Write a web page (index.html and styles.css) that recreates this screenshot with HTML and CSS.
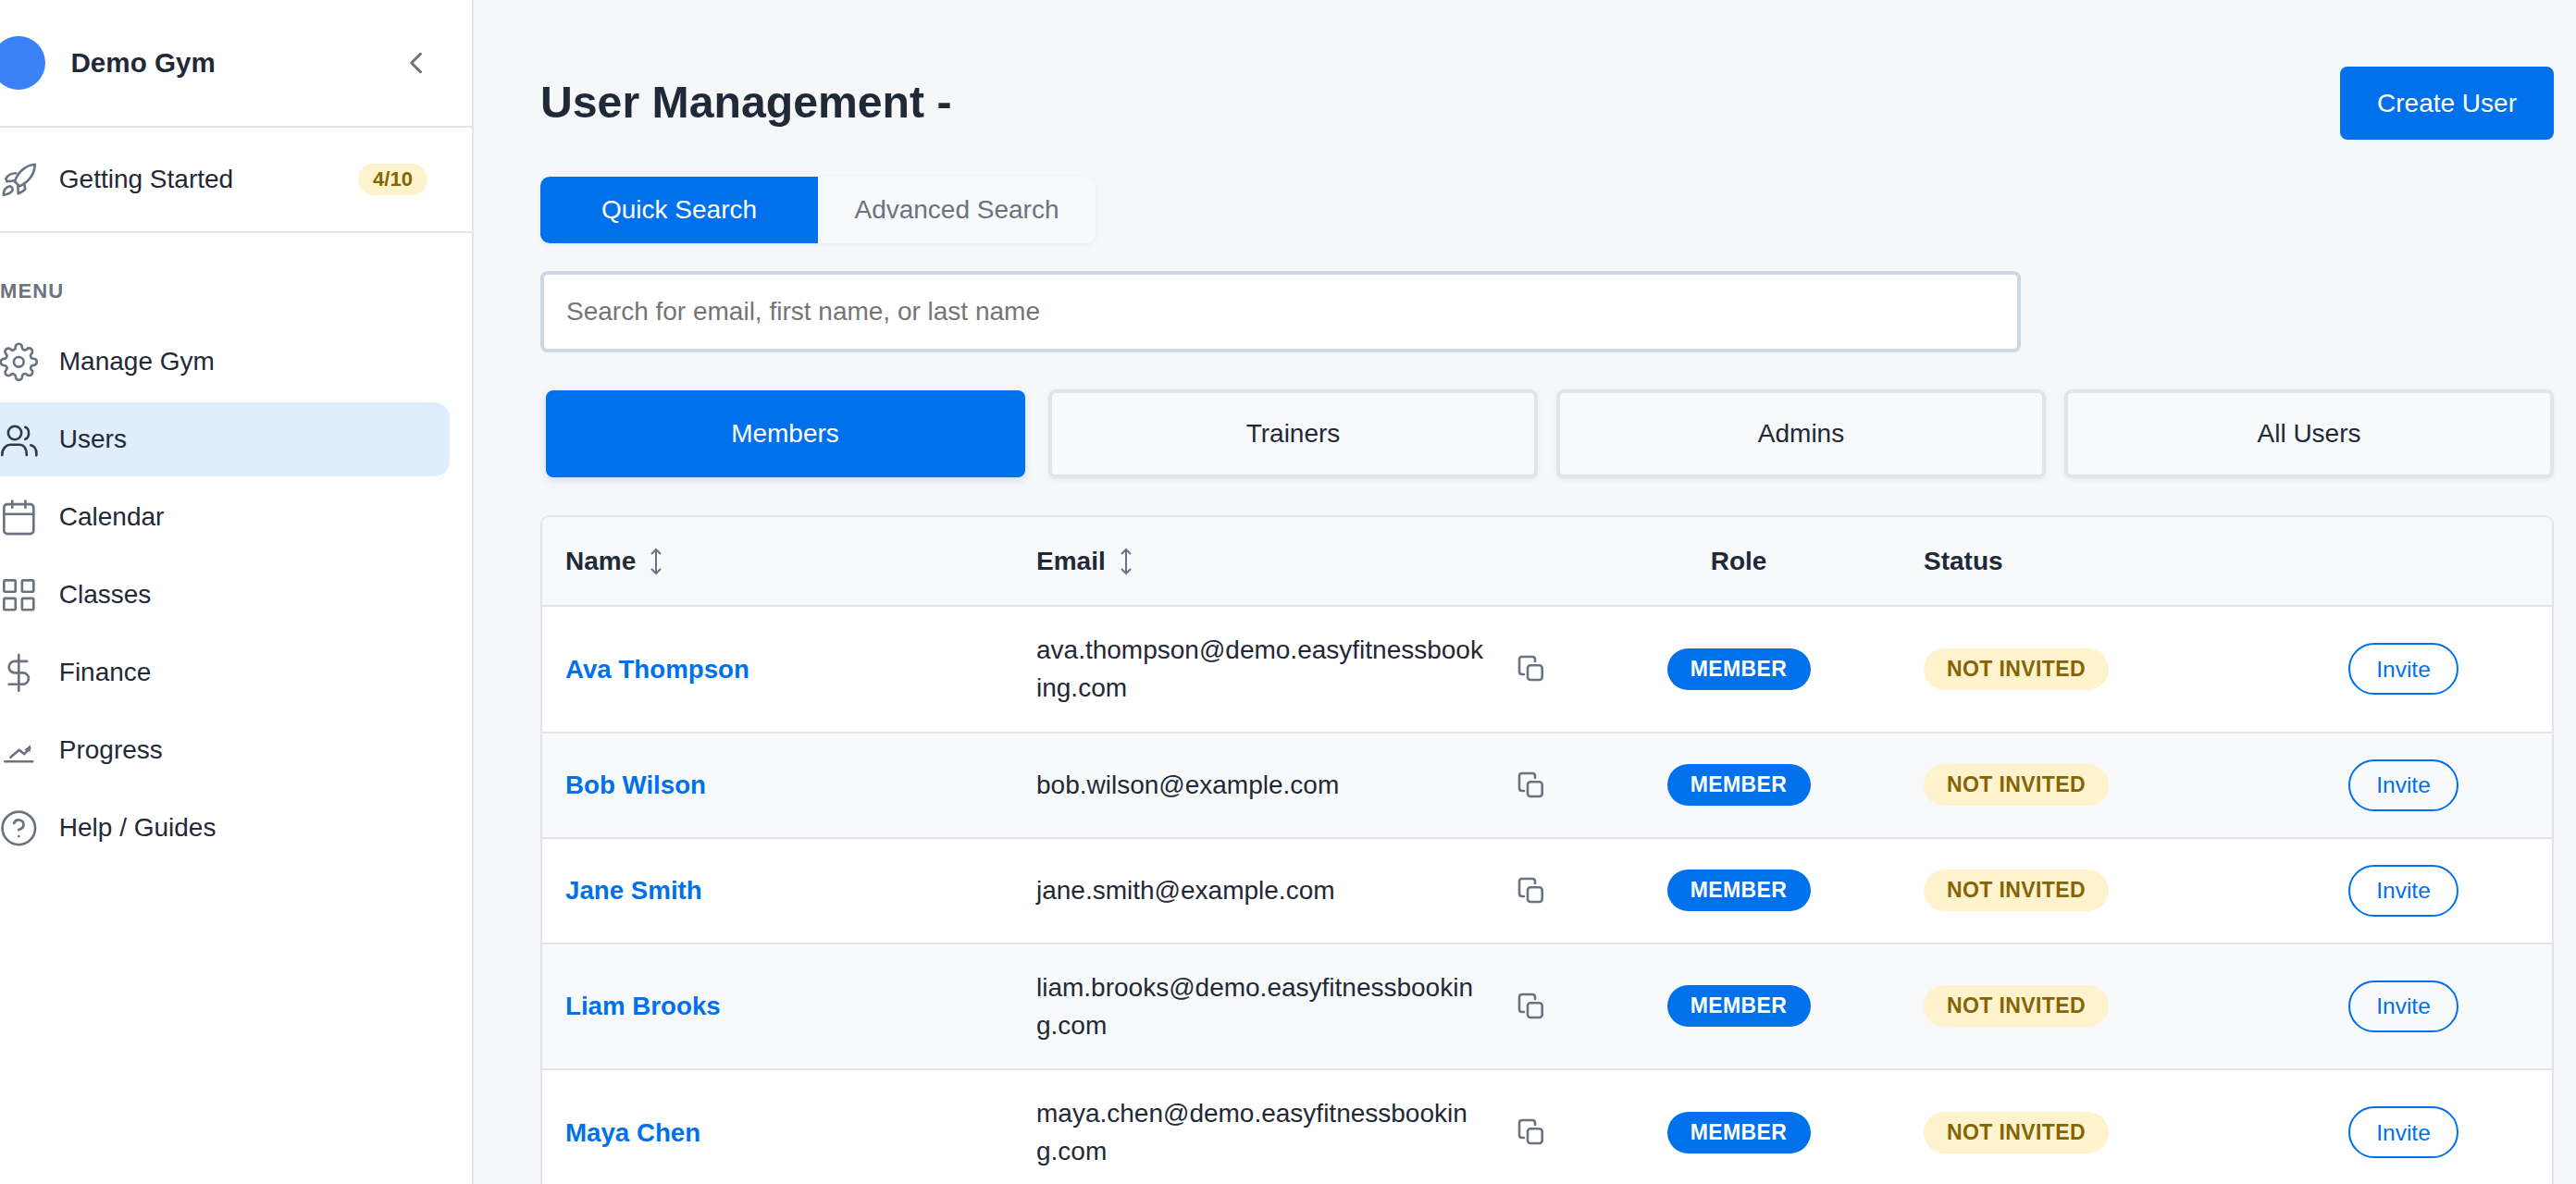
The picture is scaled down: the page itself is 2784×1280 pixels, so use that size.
FILE: index.html
```html
<!DOCTYPE html>
<html lang="en">
<head>
<meta charset="utf-8">
<title>User Management</title>
<link rel="stylesheet" href="styles.css">
</head>
<body>
<div class="app">
  <aside class="sidebar">
    <div class="brand">
      <span class="brand-logo"></span>
      <span class="brand-name">Demo Gym</span>
      <svg class="brand-toggle" viewBox="0 0 24 24"><path d="M15 5.5 8.5 12l6.5 6.5"/></svg>
    </div>
    <div class="onboarding">
      <svg class="icon" viewBox="-1.3 6.7 42.6 42.6"><path d="M37.5 11.5C30 12 20 17 15.5 30l5.500 5C33 29 37 20 37.500 11.500Z"/><path d="M17 21c-5 0-9 2-11 6l1.500 3 8-1"/><path d="m26 33 1 5c-2.500 3-5.500 4-7.500 5l-.5-8"/><path d="M3.500 44.500c0-5 2.500-8.500 7-9.500 2.500 1 3.500 3 2.500 5-2 3-6 4-9.500 4.500Z"/></svg>
      <span class="nav-label">Getting Started</span>
      <span class="progress-badge">4/10</span>
    </div>
    <div class="menu-title">MENU</div>
    <nav class="nav">
      <a class="nav-item">
        <svg class="icon" viewBox="0 0 24 24"><circle cx="12" cy="12" r="3"/><path d="M19.400 15a1.650 1.650 0 0 0 .33 1.820l.06.06a2 2 0 0 1 0 2.830 2 2 0 0 1-2.830 0l-.06-.06a1.650 1.650 0 0 0-1.820-.33 1.650 1.650 0 0 0-1 1.510V21a2 2 0 0 1-2 2 2 2 0 0 1-2-2v-.09A1.650 1.650 0 0 0 9 19.400a1.650 1.650 0 0 0-1.820.33l-.06.06a2 2 0 0 1-2.830 0 2 2 0 0 1 0-2.830l.06-.06a1.650 1.650 0 0 0 .33-1.820 1.650 1.650 0 0 0-1.510-1H3a2 2 0 0 1-2-2 2 2 0 0 1 2-2h.09A1.650 1.650 0 0 0 4.600 9a1.650 1.650 0 0 0-.33-1.820l-.06-.06a2 2 0 0 1 0-2.830 2 2 0 0 1 2.830 0l.06.06a1.650 1.650 0 0 0 1.820.33H9a1.650 1.650 0 0 0 1-1.510V3a2 2 0 0 1 2-2 2 2 0 0 1 2 2v.09a1.650 1.650 0 0 0 1 1.510 1.650 1.650 0 0 0 1.820-.33l.06-.06a2 2 0 0 1 2.830 0 2 2 0 0 1 0 2.830l-.06.06a1.650 1.650 0 0 0-.33 1.820V9a1.650 1.650 0 0 0 1.510 1H21a2 2 0 0 1 2 2 2 2 0 0 1-2 2h-.09a1.650 1.650 0 0 0-1.510 1z"/></svg>
        <span class="nav-label">Manage Gym</span>
      </a>
      <a class="nav-item nav-item-active">
        <svg class="icon" viewBox="-1.3 2.7 42.6 42.6"><circle cx="15.700" cy="16.700" r="7.200"/><path d="M27 10.500c5 1.500 5 11.500 0 13"/><path d="M2 40.700C2 33 7 29.500 11 29.500h9.500c4.500 0 8 3.500 8 11.200"/><path d="M33 30c4 1 6.500 5 6 11"/></svg>
        <span class="nav-label">Users</span>
      </a>
      <a class="nav-item">
        <svg class="icon" viewBox="0 0 24 24"><rect x="3" y="4" width="18" height="18" rx="2"/><path d="M16 2v4M8 2v4M3 10h18"/></svg>
        <span class="nav-label">Calendar</span>
      </a>
      <a class="nav-item">
        <svg class="icon" viewBox="0 0 24 24"><rect x="3" y="3" width="7" height="7" rx=".6"/><rect x="14" y="3" width="7" height="7" rx=".6"/><rect x="14" y="14" width="7" height="7" rx=".6"/><rect x="3" y="14" width="7" height="7" rx=".6"/></svg>
        <span class="nav-label">Classes</span>
      </a>
      <a class="nav-item">
        <svg class="icon" viewBox="0 0 24 24"><path d="M12 1v22M17 5H9.500a3.500 3.500 0 0 0 0 7h5a3.500 3.500 0 0 1 0 7H6"/></svg>
        <span class="nav-label">Finance</span>
      </a>
      <a class="nav-item">
        <svg class="icon" viewBox="-1.3 -0.7 42.6 42.6"><path d="M5 32.500h30M11 28l9.500-8 5.500 4.500 6-6.500"/><path class="icon-fill" d="M32.500 14.500V22L26 20Z"/></svg>
        <span class="nav-label">Progress</span>
      </a>
      <a class="nav-item">
        <svg class="icon" viewBox="0 0 24 24"><circle cx="12" cy="12" r="10"/><path d="M9.090 9a3 3 0 0 1 5.830 1c0 2-3 3-3 3M12 17h.01"/></svg>
        <span class="nav-label">Help / Guides</span>
      </a>
    </nav>
  </aside>

  <main class="main">
    <header class="page-head">
      <h1 class="page-title">User Management -</h1>
      <button class="btn-primary">Create User</button>
    </header>

    <div class="search-tabs">
      <button class="search-tab search-tab-active">Quick Search</button>
      <button class="search-tab">Advanced Search</button>
    </div>

    <input class="search-input" type="text" placeholder="Search for email, first name, or last name">

    <div class="role-tabs">
      <button class="role-tab role-tab-active">Members</button>
      <button class="role-tab">Trainers</button>
      <button class="role-tab">Admins</button>
      <button class="role-tab">All Users</button>
    </div>

    <div class="table-wrap">
      <table class="users">
        <colgroup>
          <col class="col-name"><col class="col-email"><col class="col-role"><col class="col-status"><col class="col-action">
        </colgroup>
        <thead>
          <tr>
            <th><span class="th-sort">Name <svg class="sort" viewBox="0 0 14 30"><path d="M7 2v26M2 7l5-5 5 5M2 23l5 5 5-5"/></svg></span></th>
            <th><span class="th-sort">Email <svg class="sort" viewBox="0 0 14 30"><path d="M7 2v26M2 7l5-5 5 5M2 23l5 5 5-5"/></svg></span></th>
            <th class="center">Role</th>
            <th>Status</th>
            <th></th>
          </tr>
        </thead>
        <tbody>
          <tr>
            <td><a class="user-link">Ava Thompson</a></td>
            <td><div class="email"><span class="email-text">ava.thompson@demo.easyfitnessbook<wbr>ing.com</span><svg class="copy" viewBox="8 7 32 32"><path d="M29 15v-2q0-3-3-3H15q-3 0-3 3v13q0 3 3 3h2"/><rect x="21" y="19.300" width="15.700" height="15.700" rx="3"/></svg></div></td>
            <td class="center"><span class="pill pill-role">MEMBER</span></td>
            <td><span class="pill pill-status">NOT INVITED</span></td>
            <td class="center"><button class="btn-invite">Invite</button></td>
          </tr>
          <tr>
            <td><a class="user-link">Bob Wilson</a></td>
            <td><div class="email"><span class="email-text">bob.wilson@example.com</span><svg class="copy" viewBox="8 7 32 32"><path d="M29 15v-2q0-3-3-3H15q-3 0-3 3v13q0 3 3 3h2"/><rect x="21" y="19.300" width="15.700" height="15.700" rx="3"/></svg></div></td>
            <td class="center"><span class="pill pill-role">MEMBER</span></td>
            <td><span class="pill pill-status">NOT INVITED</span></td>
            <td class="center"><button class="btn-invite">Invite</button></td>
          </tr>
          <tr>
            <td><a class="user-link">Jane Smith</a></td>
            <td><div class="email"><span class="email-text">jane.smith@example.com</span><svg class="copy" viewBox="8 7 32 32"><path d="M29 15v-2q0-3-3-3H15q-3 0-3 3v13q0 3 3 3h2"/><rect x="21" y="19.300" width="15.700" height="15.700" rx="3"/></svg></div></td>
            <td class="center"><span class="pill pill-role">MEMBER</span></td>
            <td><span class="pill pill-status">NOT INVITED</span></td>
            <td class="center"><button class="btn-invite">Invite</button></td>
          </tr>
          <tr>
            <td><a class="user-link">Liam Brooks</a></td>
            <td><div class="email"><span class="email-text">liam.brooks@demo.easyfitnessbookin<wbr>g.com</span><svg class="copy" viewBox="8 7 32 32"><path d="M29 15v-2q0-3-3-3H15q-3 0-3 3v13q0 3 3 3h2"/><rect x="21" y="19.300" width="15.700" height="15.700" rx="3"/></svg></div></td>
            <td class="center"><span class="pill pill-role">MEMBER</span></td>
            <td><span class="pill pill-status">NOT INVITED</span></td>
            <td class="center"><button class="btn-invite">Invite</button></td>
          </tr>
          <tr>
            <td><a class="user-link">Maya Chen</a></td>
            <td><div class="email"><span class="email-text">maya.chen@demo.easyfitnessbookin<wbr>g.com</span><svg class="copy" viewBox="8 7 32 32"><path d="M29 15v-2q0-3-3-3H15q-3 0-3 3v13q0 3 3 3h2"/><rect x="21" y="19.300" width="15.700" height="15.700" rx="3"/></svg></div></td>
            <td class="center"><span class="pill pill-role">MEMBER</span></td>
            <td><span class="pill pill-status">NOT INVITED</span></td>
            <td class="center"><button class="btn-invite">Invite</button></td>
          </tr>
        </tbody>
      </table>
    </div>
  </main>
</div>
</body>
</html>
```

FILE: styles.css
```css
* { box-sizing: border-box; }
html, body { margin: 0; height: 100%; overflow: hidden; }
body {
  font-family: "Liberation Sans", Arial, sans-serif;
  font-size: 28px;
  color: #1f2937;
  background: #f6f7f9;
}
button, input { font: inherit; }

.app { display: flex; height: 1280px; overflow: hidden; }

/* Sidebar */
.sidebar {
  flex: 0 0 512px;
  background: #fff;
  border-right: 2px solid #e2e6ec;
  overflow: hidden;
}
.brand {
  display: flex;
  align-items: center;
  height: 138px;
  padding-right: 42px;
  border-bottom: 2px solid #e2e6ec;
}
.brand-logo {
  flex: none;
  width: 58px;
  height: 58px;
  margin-left: -9px;
  border-radius: 50%;
  background: #3b82f6;
}
.brand-name { flex: 1; margin-left: 27.500px; font-size: 29.600px; font-weight: 700; color: #1f2937; }
.brand-toggle {
  flex: none;
  width: 36px;
  height: 36px;
  fill: none;
  stroke: #6b7280;
  stroke-width: 2;
  stroke-linecap: round;
  stroke-linejoin: round;
}
.onboarding {
  display: flex;
  align-items: center;
  height: 114px;
  padding: 0 48px 0 0;
  margin-left: -1.3px;
  border-bottom: 2px solid #e2e6ec;
}
.icon {
  flex: none;
  width: 42.6px;
  height: 42.6px;
  fill: none;
  stroke: #6b7280;
  stroke-width: 1.5;
  stroke-linecap: round;
  stroke-linejoin: round;
}
.icon[viewBox^="-1.3"] { stroke-width: 2.6; }
.icon-fill { fill: #6b7280; stroke: none; }
.nav-label { margin-left: 22.500px; }
.onboarding .nav-label { flex: 1; }
.progress-badge {
  flex: none;
  width: 75px;
  height: 34px;
  border-radius: 17px;
  background: #fff3cd;
  color: #856404;
  font-size: 22px;
  font-weight: 700;
  line-height: 34px;
  text-align: center;
}
.menu-title {
  height: 99px;
  padding-top: 50px;
  font-size: 22px;
  line-height: 26px;
  font-weight: 700;
  letter-spacing: 1.1px;
  color: #6b7280;
}
.nav { display: flex; flex-direction: column; gap: 4px; margin-left: -40px; margin-right: 24px; }
.nav-item {
  display: flex;
  align-items: center;
  height: 80px;
  padding-left: 38.7px;
  border-radius: 16px;
}
.nav-item-active { background: #e0edfc; }
.nav-item-active .icon { stroke: #2f3b4d; }

/* Main */
.main { flex: 1; min-width: 0; padding: 72px 24px 0 72px; overflow: hidden; }
.page-head { display: flex; align-items: flex-start; justify-content: space-between; height: 119px; }
.page-title {
  margin: 8px 0 0;
  font-size: 48.200px;
  line-height: 60px;
  font-weight: 700;
  color: #1f2937;
}
.btn-primary {
  width: 231px;
  height: 79px;
  border: 0;
  border-radius: 8px;
  background: #0071eb;
  color: #fff;
}
.search-tabs { display: flex; width: 600px; height: 72px; border-radius: 10px; box-shadow: 0 2px 6px rgba(0, 0, 0, .05); }
.search-tab {
  flex: none;
  width: 300px;
  border: 0;
  background: #f8f9fb;
  color: #6b7280;
  border-radius: 0 10px 10px 0;
}
.search-tab-active { background: #0071eb; color: #fff; border-radius: 10px 0 0 10px; }
.search-input {
  display: block;
  width: 1600px;
  height: 88px;
  margin-top: 30px;
  padding: 0 24px;
  border: 4px solid #cdd6e2;
  border-radius: 8px;
  background: #fff;
  color: #1f2937;
  outline: 0;
}
.role-tabs { display: flex; gap: 20px; margin-top: 40px; height: 96px; }
.role-tab {
  flex: 0 0 529px;
  border: 4px solid #e2e4ea;
  border-radius: 8px;
  background: #f8f9fb;
  color: #1f2937;
  box-shadow: 0 2px 5px rgba(0, 0, 0, .06);
}
.role-tab-active {
  flex: 0 0 518px;
  height: 94px;
  margin: 1px 5.500px 0 5.500px;
  border: 0;
  background: #0071eb;
  color: #fff;
  box-shadow: 0 3px 8px rgba(0, 113, 235, .18);
}

/* Table */
.table-wrap {
  margin-top: 40px;
  border: 2px solid #e2e4ea;
  border-radius: 10px;
  overflow: hidden;
  background: #fff;
}
.users { width: 100%; border-collapse: separate; border-spacing: 0; table-layout: fixed; }
.col-name { width: 509px; }
.col-email { width: 609px; }
.col-role { width: 350px; }
.col-status { width: 383px; }
.col-action { width: 321px; }
.users th {
  height: 97px;
  padding: 0 27px 0 25px;
  background: #f8f9fb;
  border-bottom: 2px solid #e2e4ea;
  font-weight: 700;
  text-align: left;
}
.users td {
  height: 114px;
  padding: 26.300px 27px 26.300px 25px;
  border-bottom: 2px solid #e2e4ea;
  line-height: 41px;
}
.users tbody tr:nth-child(even) td { background: #f8f9fb; }
.users th.center, .users td.center { text-align: center; padding-left: 27px; }
.th-sort { display: inline-flex; align-items: center; gap: 15px; }
.sort {
  flex: none;
  width: 14px;
  height: 30px;
  fill: none;
  stroke: #6b7280;
  stroke-width: 2;
}
.user-link { color: #0071eb; font-size: 27.700px; font-weight: 700; }
.email { display: flex; align-items: center; justify-content: space-between; margin-right: 7px; }
.email-text { width: 500px; color: #1f2937; }
.copy {
  flex: none;
  width: 32px;
  height: 32px;
  fill: none;
  stroke: #6b7280;
  stroke-width: 2.6;
  stroke-linecap: round;
}
.pill {
  display: inline-block;
  height: 45px;
  border-radius: 23px;
  font-size: 23px;
  font-weight: 700;
  line-height: 45px;
  letter-spacing: .4px;
  vertical-align: middle;
  text-align: center;
}
.pill-role { width: 155px; background: #0071eb; color: #fff; }
.pill-status { width: 200px; background: #fff3cd; color: #856404; }
.btn-invite {
  width: 119px;
  height: 56px;
  padding: 0;
  border: 2.500px solid #0071eb;
  border-radius: 28px;
  background: transparent;
  color: #0071eb;
  font-size: 24.500px;
  vertical-align: middle;
}
```
